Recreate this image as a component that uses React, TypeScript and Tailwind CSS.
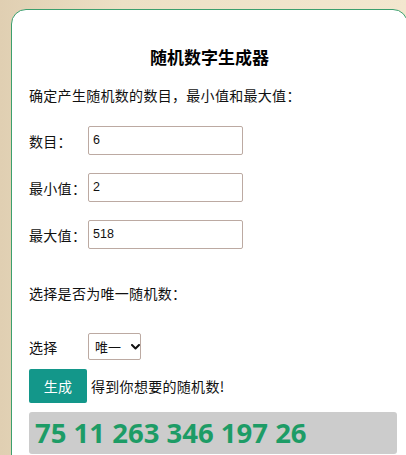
import React from "react";

export default function App() {
  const font = { fontFamily: '"Noto Sans CJK SC", "Noto Sans", sans-serif' };
  return (
    <div
      className="w-[406px] h-[455px] overflow-hidden bg-[linear-gradient(90deg,#e0cfb2_0%,#ece0c5_30%,#f3e7cf_100%)]"
      style={font}
    >
      <div className="ml-[11px] mt-[9px] w-[397px] h-[470px] rounded-[15px] border border-[#3c9f6e] bg-white pl-[17px] pt-[35px] text-[14px] text-[#111] tracking-[0.3px]">
        <div className="text-center text-[17px] leading-[24px] font-bold text-black pr-[17px] tracking-normal">随机数字生成器</div>
        <div className="mt-[16px] leading-[20px]">确定产生随机数的数目，最小值和最大值：</div>

        <div className="mt-[21px] flex items-center h-[29px]">
          <span className="w-[59px] leading-[20px]">数目：</span>
          <div className="w-[155px] h-[29px] border border-[#bcaaa2] rounded-[2px] flex items-center pl-[4px] text-[12.5px] tracking-normal" style={{ fontFamily: '"Liberation Sans", Arial, sans-serif' }}>6</div>
        </div>
        <div className="mt-[18px] flex items-center h-[29px]">
          <span className="w-[59px] leading-[20px]">最小值：</span>
          <div className="w-[155px] h-[29px] border border-[#bcaaa2] rounded-[2px] flex items-center pl-[4px] text-[12.5px] tracking-normal" style={{ fontFamily: '"Liberation Sans", Arial, sans-serif' }}>2</div>
        </div>
        <div className="mt-[18px] flex items-center h-[29px]">
          <span className="w-[59px] leading-[20px]">最大值：</span>
          <div className="w-[155px] h-[29px] border border-[#bcaaa2] rounded-[2px] flex items-center pl-[4px] text-[12.5px] tracking-normal" style={{ fontFamily: '"Liberation Sans", Arial, sans-serif' }}>518</div>
        </div>

        <div className="mt-[34px] leading-[20px]">选择是否为唯一随机数：</div>

        <div className="mt-[30px] flex items-center h-[27px]">
          <span className="w-[59px] leading-[20px]">选择</span>
          <div className="w-[53px] h-[27px] border border-[#bcaaa2] rounded-[2px] flex items-center pl-[6px] gap-[10px] text-[13px] tracking-normal">
            <span className="leading-[18px]">唯一</span>
            <svg width="9" height="6" viewBox="0 0 9 6" fill="none">
              <path d="M1 1 L4.5 4.5 L8 1" stroke="#111" strokeWidth="2" strokeLinecap="round" strokeLinejoin="round" />
            </svg>
          </div>
        </div>

        <div className="mt-[9px] flex items-center">
          <div className="w-[58px] h-[34px] bg-[#13978a] rounded-[2px] flex items-center justify-center text-white text-[14px]">生成</div>
          <span className="ml-[4px] leading-[20px]">得到你想要的随机数!</span>
        </div>

        <div className="mt-[9px] w-[368px] h-[42px] bg-[#cccccc] rounded-[3px] pl-[6px] flex items-center tracking-normal">
          <span className="text-[27.5px] font-bold text-[#1d9c66] leading-[36px]" style={{ fontFamily: '"Open Sans", sans-serif' }}>75 11 263 346 197 26</span>
        </div>
      </div>
    </div>
  );
}
